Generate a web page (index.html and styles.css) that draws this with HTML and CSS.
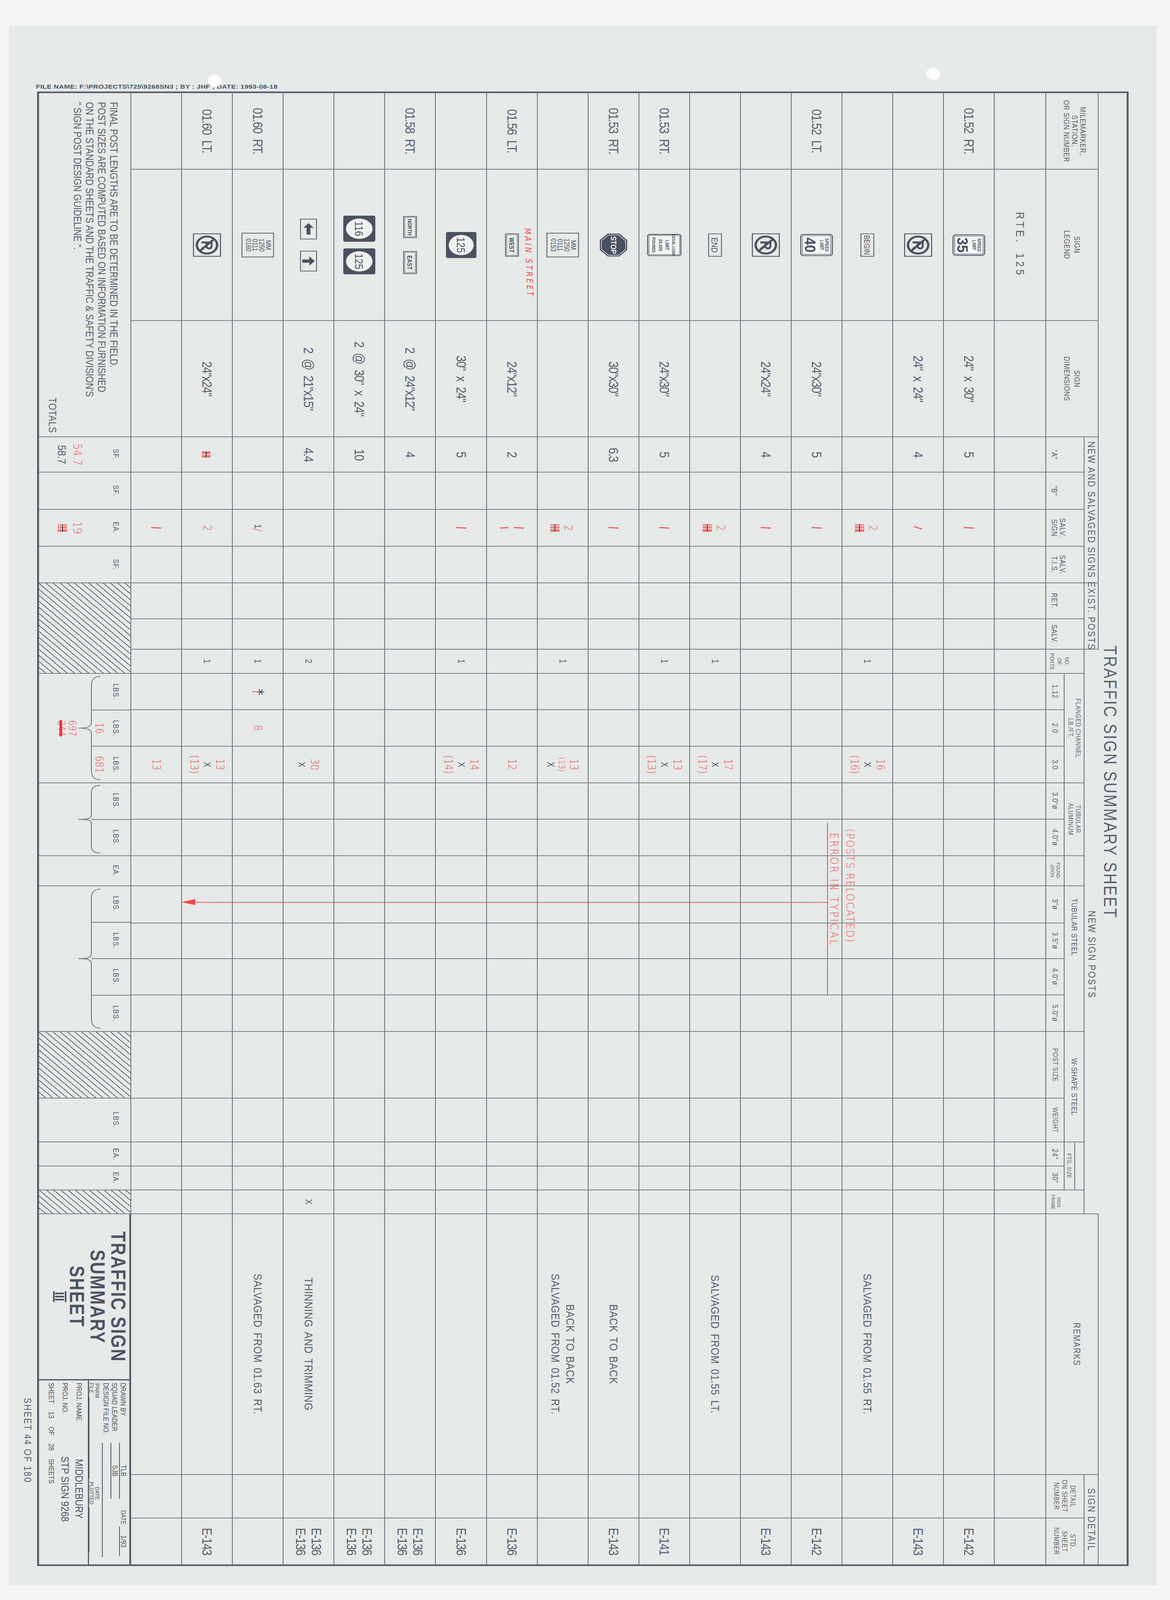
FILE: index.html
```html
<!DOCTYPE html>
<html lang="en">
<head>
<meta charset="utf-8">
<title>Traffic Sign Summary Sheet</title>
<link rel="stylesheet" href="styles.css">
</head>
<body>
<div class="page">
<div class="art">
 <div class="sheet">
   <div class="frame">
    <div class="hdr">
     <div class="band cs28">TRAFFIC SIGN SUMMARY SHEET</div>
     <div class="rs3 bt h-mm">MILEMARKER,<br>STATION,<br>OR SIGN NUMBER</div>
     <div class="rs3 bt h-2l">SIGN<br>LEGEND</div>
     <div class="rs3 bt h-2l">SIGN<br>DIMENSIONS</div>
     <div class="cs4 bt bb grp">NEW AND SALVAGED SIGNS</div>
     <div class="cs2 bt bb grp">EXIST. POSTS</div>
     <div class="cs16 bb grp nsp">NEW SIGN POSTS</div>
     <div class="rs3 bt rem">REMARKS</div>
     <div class="cs2 bt bb grp nr">SIGN DETAIL</div>
     <div class="rs2 bot">"A"</div>
     <div class="rs2 bot">"B"</div>
     <div class="rs2 bot">SALV.<br>SIGN</div>
     <div class="rs2 bot">SALV.<br>T.I.S.</div>
     <div class="rs2 bot">RET.</div>
     <div class="rs2 bot">SALV.</div>
     <div class="rs2 bot sm">NO.<br>OF<br>POSTS</div>
     <div class="cs3 bb sub">FLANGED CHANNEL<br>LB./FT.</div>
     <div class="cs2 bb sub">TUBULAR<br>ALUMINUM</div>
     <div class="bb"></div>
     <div class="cs4 bb sub2 ts">TUBULAR STEEL</div>
     <div class="cs2 bb sub2">W-SHAPE STEEL</div>
     <div class="cs2 bb ftg"><span>FTG. SIZE</span></div>
     <div class="rs2 bot xs">SIGN<br>FRAME</div>
     <div class="rs2 det">DETAIL<br>ON SHEET<br>NUMBER</div>
     <div class="rs2 det nr">STD.<br>SHEET<br>NUMBER</div>
     <div>1.12</div><div>2.0</div><div>3.0</div><div>3.0"ø</div><div>4.0"ø</div><div class="xs">FOUND-<br>ATION</div><div>3"ø</div><div>3.5"ø</div><div>4.0"ø</div><div>5.0"ø</div><div class="s18">POST SIZE</div><div class="s18">WEIGHT</div><div>24"</div><div>30"</div>
    </div>

    <div class="row rte"><i></i><i class="rtet">RTE. 125</i><i></i><i></i><i></i><i></i><i></i><i></i><i></i><i></i><i></i><i></i><i></i><i></i><i></i><i></i><i></i><i></i><i></i><i></i><i></i><i></i><i></i><i></i><i></i><i></i><i></i><i></i></div>

    <!-- R1 -->
    <div class="row"><i>01.52 RT.</i><i><svg class="sg" width="84" height="66" viewBox="0 0 84 66"><g transform="translate(84 0) rotate(90)"><rect x="1.5" y="1.5" width="63" height="81" rx="7" fill="#f3f5f3" stroke="currentColor" stroke-width="2.5"/><rect x="5.5" y="5.5" width="55" height="73" rx="3" fill="none" stroke="currentColor" stroke-width="1.4"/><text x="33" y="20" text-anchor="middle" font-size="12" font-weight="700">SPEED</text><text x="33" y="33" text-anchor="middle" font-size="12" font-weight="700">LIMIT</text><text x="33" y="72" text-anchor="middle" font-size="38" font-weight="700" textLength="46" lengthAdjust="spacingAndGlyphs">35</text></g></svg></i><i>24" x 30"</i><i>5</i><i></i><i><b class="tick"></b></i><i></i><i></i><i></i><i></i><i></i><i></i><i></i><i></i><i></i><i></i><i></i><i></i><i></i><i></i><i></i><i></i><i></i><i></i><i></i><i></i><i></i><i>E-142</i></div>

    <!-- R2 -->
    <div class="row"><i></i><i><svg class="sg" width="72" height="72" viewBox="0 0 72 72"><g transform="translate(72 0) rotate(90)"><rect x="1.5" y="1.5" width="69" height="69" fill="none" stroke="currentColor" stroke-width="2.5"/><circle cx="36" cy="36" r="26" fill="none" stroke="currentColor" stroke-width="6"/><text x="37" y="50" text-anchor="middle" font-size="40" font-weight="700">R</text><line x1="18" y1="18" x2="54" y2="54" stroke="currentColor" stroke-width="6"/></g></svg></i><i>24" x 24"</i><i>4</i><i></i><i><b class="tick sl"></b></i><i></i><i></i><i></i><i></i><i></i><i></i><i></i><i></i><i></i><i></i><i></i><i></i><i></i><i></i><i></i><i></i><i></i><i></i><i></i><i></i><i></i><i>E-143</i></div>

    <!-- R3 -->
    <div class="row"><i></i><i><svg class="sg" width="36" height="72" viewBox="0 0 36 72"><g transform="translate(36 0) rotate(90)"><rect x="1.5" y="1.5" width="69" height="33" fill="none" stroke="currentColor" stroke-width="2"/><text x="36" y="26" text-anchor="middle" font-size="20" textLength="60" lengthAdjust="spacingAndGlyphs">BEGIN</text></g></svg></i><i></i><i></i><i></i><i><span class="stk"><b class="rv">2</b><b class="scr"></b></span></i><i></i><i></i><i></i><i class="n1">1</i><i></i><i></i><i><span class="stk"><b class="rv">16</b><b class="xx">X</b><b class="rv">(16)</b></span></i><i></i><i></i><i></i><i></i><i></i><i></i><i></i><i></i><i></i><i></i><i></i><i></i><i class="rm">SALVAGED FROM 01.55 RT.</i><i></i><i></i></div>

    <!-- R4 -->
    <div class="row"><i>01.52 LT.</i><i><svg class="sg" width="84" height="68" viewBox="0 0 84 68"><g transform="translate(84 0) rotate(90)"><rect x="1.5" y="1.5" width="65" height="81" rx="7" fill="#f3f5f3" stroke="currentColor" stroke-width="2.5"/><rect x="5.5" y="5.5" width="57" height="73" rx="3" fill="none" stroke="currentColor" stroke-width="1.4"/><text x="34" y="20" text-anchor="middle" font-size="12" font-weight="700">SPEED</text><text x="34" y="33" text-anchor="middle" font-size="12" font-weight="700">LIMIT</text><text x="34" y="72" text-anchor="middle" font-size="38" font-weight="700" textLength="46" lengthAdjust="spacingAndGlyphs">40</text></g></svg></i><i>24"x30"</i><i>5</i><i></i><i><b class="tick"></b></i><i></i><i></i><i></i><i></i><i></i><i></i><i></i><i></i><i></i><i></i><i></i><i></i><i></i><i></i><i></i><i></i><i></i><i></i><i></i><i></i><i></i><i>E-142</i></div>

    <!-- R5 -->
    <div class="row"><i></i><i><svg class="sg" width="72" height="72" viewBox="0 0 72 72"><g transform="translate(72 0) rotate(90)"><rect x="1.5" y="1.5" width="69" height="69" fill="none" stroke="currentColor" stroke-width="2.5"/><circle cx="36" cy="36" r="26" fill="none" stroke="currentColor" stroke-width="6"/><text x="37" y="50" text-anchor="middle" font-size="40" font-weight="700">R</text><line x1="18" y1="18" x2="54" y2="54" stroke="currentColor" stroke-width="6"/></g></svg></i><i>24"x24"</i><i>4</i><i></i><i><b class="tick"></b></i><i></i><i></i><i></i><i></i><i></i><i></i><i></i><i></i><i></i><i></i><i></i><i></i><i></i><i></i><i></i><i></i><i></i><i></i><i></i><i></i><i></i><i>E-143</i></div>

    <!-- R6 -->
    <div class="row"><i></i><i><svg class="sg" width="36" height="72" viewBox="0 0 36 72"><g transform="translate(36 0) rotate(90)"><rect x="1.5" y="1.5" width="69" height="33" fill="none" stroke="currentColor" stroke-width="2"/><text x="36" y="27" text-anchor="middle" font-size="22" textLength="46" lengthAdjust="spacingAndGlyphs">END</text></g></svg></i><i></i><i></i><i></i><i><span class="stk"><b class="rv">2</b><b class="scr"></b></span></i><i></i><i></i><i></i><i class="n1">1</i><i></i><i></i><i><span class="stk"><b class="rv">17</b><b class="xx">X</b><b class="rv">(17)</b></span></i><i></i><i></i><i></i><i></i><i></i><i></i><i></i><i></i><i></i><i></i><i></i><i></i><i class="rm">SALVAGED FROM 01.55 LT.</i><i></i><i></i></div>

    <!-- R7 -->
    <div class="row"><i>01.53 RT.</i><i><svg class="sg" width="88" height="68" viewBox="0 0 88 68"><g transform="translate(88 0) rotate(90)"><rect x="1.5" y="1.5" width="65" height="85" rx="5" fill="#f3f5f3" stroke="currentColor" stroke-width="2.5"/><rect x="5" y="5" width="58" height="78" rx="2" fill="none" stroke="currentColor" stroke-width="1.2"/><text x="34" y="24" text-anchor="middle" font-size="10" font-weight="700">LEGAL LOAD</text><text x="34" y="41" text-anchor="middle" font-size="12" font-weight="700">LIMIT</text><text x="34" y="58" text-anchor="middle" font-size="12" font-weight="700">24,000</text><text x="34" y="75" text-anchor="middle" font-size="11" font-weight="700">POUNDS</text></g></svg></i><i>24"x30"</i><i>5</i><i></i><i><b class="tick"></b></i><i></i><i></i><i></i><i class="n1">1</i><i></i><i></i><i><span class="stk"><b class="rv">13</b><b class="xx">X</b><b class="rv">(13)</b></span></i><i></i><i></i><i></i><i></i><i></i><i></i><i></i><i></i><i></i><i></i><i></i><i></i><i></i><i></i><i>E-141</i></div>

    <!-- R8 -->
    <div class="row"><i>01.53 RT.</i><i><svg class="sg" width="72" height="72" viewBox="0 0 72 72"><g transform="translate(72 0) rotate(90)"><polygon points="21,1 51,1 71,21 71,51 51,71 21,71 1,51 1,21" fill="currentColor"/><polygon points="23,5 49,5 67,23 67,49 49,67 23,67 5,49 5,23" fill="none" stroke="#eef1ef" stroke-width="1.5"/><text class="wt" x="36" y="43" text-anchor="middle" font-size="20" font-weight="700" textLength="54" lengthAdjust="spacingAndGlyphs">STOP</text></g></svg></i><i>30"x30"</i><i>6.3</i><i></i><i><b class="tick"></b></i><i></i><i></i><i></i><i></i><i></i><i></i><i></i><i></i><i></i><i></i><i></i><i></i><i></i><i></i><i></i><i></i><i></i><i></i><i></i><i class="rm">BACK TO BACK</i><i></i><i>E-143</i></div>

    <!-- R9 -->
    <div class="row"><i></i><i><svg class="sg" width="84" height="76" viewBox="0 0 84 76"><g transform="translate(84 0) rotate(90)"><rect x="1.5" y="1.5" width="73" height="81" fill="none" stroke="currentColor" stroke-width="2"/><text x="38" y="21" text-anchor="middle" font-size="18">MM</text><text x="38" y="38" text-anchor="middle" font-size="18">1250</text><text x="38" y="55" text-anchor="middle" font-size="18">0111</text><text x="38" y="72" text-anchor="middle" font-size="18">0153</text></g></svg></i><i></i><i></i><i></i><i><span class="stk"><b class="rv">2</b><b class="scr"></b></span></i><i></i><i></i><i></i><i class="n1">1</i><i></i><i></i><i><span class="stk"><b class="rv">13</b><b class="rv rs">(13)</b><b class="xx">X</b></span></i><i></i><i></i><i></i><i></i><i></i><i></i><i></i><i></i><i></i><i></i><i></i><i></i><i class="rm">BACK TO BACK<br>SALVAGED FROM 01.52 RT.</i><i></i><i></i></div>

    <!-- R10 -->
    <div class="row"><i>01.56 LT.</i><i><svg class="sg" width="36" height="72" viewBox="0 0 36 72"><g transform="translate(36 0) rotate(90)"><rect x="1.5" y="1.5" width="69" height="33" fill="none" stroke="currentColor" stroke-width="2"/><rect x="4.5" y="4.5" width="63" height="27" fill="none" stroke="currentColor" stroke-width="1"/><text x="36" y="25" text-anchor="middle" font-size="16" font-weight="700" textLength="46" lengthAdjust="spacingAndGlyphs">WEST</text></g></svg><b class="ms">MAIN STREET</b></i><i>24"x12"</i><i>2</i><i></i><i><span class="stk"><b class="tick"></b><b class="tick t2"></b></span></i><i></i><i></i><i></i><i></i><i></i><i></i><i><b class="rv">12</b></i><i></i><i></i><i></i><i></i><i></i><i></i><i></i><i></i><i></i><i></i><i></i><i></i><i></i><i></i><i>E-136</i></div>

    <!-- R11 -->
    <div class="row"><i></i><i><svg class="sg" width="78" height="80" viewBox="0 0 78 80"><g transform="translate(78 0) rotate(90)"><rect x="0" y="0" width="80" height="78" rx="5" fill="currentColor"/><ellipse cx="40" cy="39" rx="31" ry="32" fill="#eef1ef"/><text x="40" y="50" text-anchor="middle" font-size="30" textLength="48" lengthAdjust="spacingAndGlyphs">125</text></g></svg></i><i>30" x 24"</i><i>5</i><i></i><i><b class="tick"></b></i><i></i><i></i><i></i><i class="n1">1</i><i></i><i></i><i><span class="stk"><b class="rv">14</b><b class="xx">X</b><b class="rv">(14)</b></span></i><i></i><i></i><i></i><i></i><i></i><i></i><i></i><i></i><i></i><i></i><i></i><i></i><i></i><i></i><i>E-136</i></div>

    <!-- R12 -->
    <div class="row"><i>01.58 RT.</i><i><span class="pair p1"><svg class="sg" width="36" height="68" viewBox="0 0 36 68"><g transform="translate(36 0) rotate(90)"><rect x="1.5" y="1.5" width="65" height="33" fill="none" stroke="currentColor" stroke-width="2"/><rect x="4.5" y="4.5" width="59" height="27" fill="none" stroke="currentColor" stroke-width="1"/><text x="34" y="24" text-anchor="middle" font-size="15" font-weight="700" textLength="50" lengthAdjust="spacingAndGlyphs">NORTH</text></g></svg><svg class="sg" width="36" height="71" viewBox="0 0 36 71"><g transform="translate(36 0) rotate(90)"><rect x="1.5" y="1.5" width="68" height="33" fill="none" stroke="currentColor" stroke-width="2"/><rect x="4.5" y="4.5" width="62" height="27" fill="none" stroke="currentColor" stroke-width="1"/><text x="35.5" y="25" text-anchor="middle" font-size="16" font-weight="700" textLength="44" lengthAdjust="spacingAndGlyphs">EAST</text></g></svg></span></i><i>2 @ 24"x12"</i><i>4</i><i></i><i></i><i></i><i></i><i></i><i></i><i></i><i></i><i></i><i></i><i></i><i></i><i></i><i></i><i></i><i></i><i></i><i></i><i></i><i></i><i></i><i></i><i></i><i class="e2">E-136<br>E-136</i></div>

    <!-- R13 -->
    <div class="row"><i></i><i><span class="pair p2"><svg class="sg" width="82" height="80" viewBox="0 0 82 80"><g transform="translate(82 0) rotate(90)"><rect x="0" y="0" width="80" height="82" rx="5" fill="currentColor"/><ellipse cx="40" cy="41" rx="31" ry="34" fill="#eef1ef"/><text x="40" y="52" text-anchor="middle" font-size="30" textLength="46" lengthAdjust="spacingAndGlyphs">116</text></g></svg><svg class="sg" width="82" height="80" viewBox="0 0 82 80"><g transform="translate(82 0) rotate(90)"><rect x="0" y="0" width="80" height="82" rx="5" fill="currentColor"/><ellipse cx="40" cy="41" rx="31" ry="34" fill="#eef1ef"/><text x="40" y="52" text-anchor="middle" font-size="30" textLength="48" lengthAdjust="spacingAndGlyphs">125</text></g></svg></span></i><i>2 @ 30" x 24"</i><i>10</i><i></i><i></i><i></i><i></i><i></i><i></i><i></i><i></i><i></i><i></i><i></i><i></i><i></i><i></i><i></i><i></i><i></i><i></i><i></i><i></i><i></i><i></i><i></i><i class="e2">E-136<br>E-136</i></div>

    <!-- R14 -->
    <div class="row"><i></i><i><span class="pair p3"><svg class="sg" width="44" height="64" viewBox="0 0 44 64"><g transform="translate(44 0) rotate(90)"><rect x="1.5" y="1.5" width="61" height="41" fill="none" stroke="currentColor" stroke-width="2"/><polygon points="14,22 28,9 28,17 49,17 49,27 28,27 28,35" fill="currentColor"/></g></svg><svg class="sg" width="44" height="64" viewBox="0 0 44 64"><g transform="translate(44 0) rotate(90)"><rect x="1.5" y="1.5" width="61" height="41" fill="none" stroke="currentColor" stroke-width="2"/><polygon points="32,6 46,20 37,20 37,38 27,38 27,20 18,20" fill="currentColor"/></g></svg></span></i><i>2 @ 21"x15"</i><i>4.4</i><i></i><i></i><i></i><i></i><i></i><i class="n1">2</i><i></i><i></i><i><span class="stk"><b class="rv">30</b><b class="xx">X</b></span></i><i></i><i></i><i></i><i></i><i></i><i></i><i></i><i></i><i></i><i></i><i></i><i class="n1">X</i><i class="rm">THINNING AND TRIMMING</i><i></i><i class="e2">E-136<br>E-136</i></div>

    <!-- R15 -->
    <div class="row"><i>01.60 RT.</i><i><svg class="sg" width="84" height="76" viewBox="0 0 84 76"><g transform="translate(84 0) rotate(90)"><rect x="1.5" y="1.5" width="73" height="81" fill="none" stroke="currentColor" stroke-width="2"/><text x="38" y="21" text-anchor="middle" font-size="18">MM</text><text x="38" y="38" text-anchor="middle" font-size="18">1250</text><text x="38" y="55" text-anchor="middle" font-size="18">0111</text><text x="38" y="72" text-anchor="middle" font-size="18">0160</text></g></svg></i><i></i><i></i><i></i><i><span class="one"><b class="n1b">1</b><b class="rv sl2">/</b></span></i><i></i><i></i><i></i><i class="n1">1</i><i><b class="ast">*</b></i><i><b class="rv">8</b></i><i></i><i></i><i></i><i></i><i></i><i></i><i></i><i></i><i></i><i></i><i></i><i></i><i></i><i class="rm">SALVAGED FROM 01.63 RT.</i><i></i><i></i></div>

    <!-- R16 -->
    <div class="row"><i>01.60 LT.</i><i><svg class="sg" width="72" height="72" viewBox="0 0 72 72"><g transform="translate(72 0) rotate(90)"><rect x="1.5" y="1.5" width="69" height="69" fill="none" stroke="currentColor" stroke-width="2.5"/><circle cx="36" cy="36" r="26" fill="none" stroke="currentColor" stroke-width="6"/><text x="37" y="50" text-anchor="middle" font-size="40" font-weight="700">R</text><line x1="18" y1="18" x2="54" y2="54" stroke="currentColor" stroke-width="6"/></g></svg></i><i>24"x24"</i><i><b class="scr scr2"></b></i><i></i><i><b class="rv">2</b></i><i></i><i></i><i></i><i class="n1">1</i><i></i><i></i><i><span class="stk"><b class="rv">13</b><b class="xx">X</b><b class="rv">(13)</b></span></i><i></i><i></i><i></i><i></i><i></i><i></i><i></i><i></i><i></i><i></i><i></i><i></i><i></i><i></i><i>E-143</i></div>

    <!-- R17 -->
    <div class="row"><i></i><i></i><i></i><i></i><i></i><i><b class="tick"></b></i><i></i><i></i><i></i><i></i><i></i><i></i><i><b class="rv">13</b></i><i></i><i></i><i></i><i></i><i></i><i></i><i></i><i></i><i></i><i></i><i></i><i></i><i></i><i></i><i></i></div>

    <div class="tot">
     <div class="notes cs3"><p>FINAL POST LENGTHS ARE TO BE DETERMINED IN THE FIELD.<br>POST SIZES ARE COMPUTED BASED ON INFORMATION FURNISHED<br>ON THE STANDARD SHEETS AND THE TRAFFIC &amp; SAFETY DIVISION'S<br>" SIGN POST DESIGN GUIDELINE ".</p><span class="totals">TOTALS</span></div>
     <div class="u"><span>SF.</span><span class="uv"><b class="rv">54.7</b><b class="bv">58.7</b></span></div>
     <div class="u"><span>SF.</span></div>
     <div class="u"><span>EA.</span><span class="uv"><b class="rv">19</b><b class="scr"></b></span></div>
     <div class="u"><span>SF.</span></div>
     <div class="hatch cs3"></div>
     <div class="brace cs3"><div class="bl"><span>LBS.</span><span>LBS.<b class="rv">16</b></span><span>LBS.<b class="rv">681</b></span></div><svg class="brs" viewBox="0 0 58 100" preserveAspectRatio="none"><path d="M58,1 C42,1 35,4 35,10 L35,44 C35,48 30,50 2,50 C30,50 35,52 35,56 L35,90 C35,96 42,99 58,99" fill="none" stroke="#646a79" stroke-width="2" vector-effect="non-scaling-stroke"/></svg><div class="bv2"><b class="rv">697</b><b class="rv strk">344</b></div></div>
     <div class="brace cs2"><div class="bl"><span>LBS.</span><span>LBS.</span></div><svg class="brs" viewBox="0 0 58 100" preserveAspectRatio="none"><path d="M58,1 C42,1 35,4 35,12 L35,44 C35,48 30,50 2,50 C30,50 35,52 35,56 L35,88 C35,96 42,99 58,99" fill="none" stroke="#646a79" stroke-width="2" vector-effect="non-scaling-stroke"/></svg></div>
     <div class="u"><span>EA.</span></div>
     <div class="brace cs4"><div class="bl"><span>LBS.</span><span>LBS.</span><span>LBS.</span><span>LBS.</span></div><svg class="brs" viewBox="0 0 58 100" preserveAspectRatio="none"><path d="M58,1 C42,1 35,3 35,8 L35,46 C35,49 30,50 2,50 C30,50 35,51 35,54 L35,92 C35,97 42,99 58,99" fill="none" stroke="#646a79" stroke-width="2" vector-effect="non-scaling-stroke"/></svg></div>
     <div class="hatch"></div>
     <div class="u"><span>LBS.</span></div>
     <div class="u"><span>EA.</span></div>
     <div class="u"><span>EA.</span></div>
     <div class="hatch"></div>
     <div class="tb cs3">
      <div class="tbt">TRAFFIC SIGN<br>SUMMARY<br>SHEET<br><span class="rom">III</span></div>
      <div class="tbi">
       <div class="tbu">
        <div class="ln"><span class="lb">DRAWN BY</span><span class="fl w1">TLB</span><span class="lb2">DATE</span><span class="fl w2">1/93</span></div>
        <div class="ln"><span class="lb">SQUAD LEADER</span><span class="fl w1">SJB</span></div>
        <div class="ln"><span class="lb">DESIGN FILE NO.</span><span class="fl w3"></span></div>
        <div class="ln ln2"><span class="lbs">IPARM<br>FILE</span><span class="fl w4"></span><span class="lb3">DATE<br>PLOTTED</span><span class="fl w5"></span></div>
       </div>
       <div class="tbl">
        <div class="ln l5"><span class="lb">PROJ. NAME</span><span class="vl">MIDDLEBURY</span></div>
        <div class="ln l5"><span class="lb">PROJ. NO.</span><span class="vl">STP SIGN 9268</span></div>
        <div class="ln l6">SHEET 13 OF 28 SHEETS</div>
       </div>
      </div>
     </div>
    </div>

    <div class="an an-t1">(POSTS RELOCATED)</div>
    <div class="an an-t2">ERROR IN TYPICAL</div>
    <div class="an an-l1"></div>
    <div class="an an-l2"></div>
    <div class="an an-ah"></div>
   </div>
   <div class="sh44">SHEET 44 OF 180</div>
 </div>
 <div class="fname">FILE NAME: F:\PROJECTS\725\9268SN3 ; BY : JHF ; DATE: 1993-08-18</div>
 <div class="hole h1"></div>
 <div class="hole h2"></div>
</div>
</div>
</body>
</html>
```

FILE: styles.css
```css
:root {
  --ln: #646a79;
  --tx: #575e6d;
  --dk: #4b5262;
  --rd: #f0474a;
  --cols: 234px 463px 356px 108px 114px 113px 112px 110px 93px 74px 111px 112px 112px 111px 112px 92px 114px 109px 111px 112px 204px 134px 74px 73px 73px 798px 133px 141px;
}

html, body {
  margin: 0;
  padding: 0;
  height: 100vh;
  overflow: hidden;
}
body {
  background: #f3f4f3;
  font-family: "Liberation Sans", Arial, sans-serif;
  color: var(--tx);
}

/* the window-sized page; the drawing inside is 2996 x 4897 and is fitted to the window height */
.page {
  width: 2996px;
  height: 100vh;
  overflow: hidden;
  background: #f3f4f3;
}
.art {
  width: 2996px;
  height: 4897px;
  display: grid;
  grid-template-columns: 2996px;
  grid-template-rows: 4897px;
  transform-origin: 0 0;
  transform: scaleY(tan(atan2(100vh, 4897px)));
}
.art > * { grid-area: 1 / 1; align-self: start; justify-self: start; }

/* the drawing is laid out in vertical writing mode: rows run right-to-left,
   columns top-to-bottom, and all text reads top-to-bottom */
.sheet {
  writing-mode: vertical-rl;
  width: 2939px;
  height: 4775px;
  margin: 78px 0 0 23px;
  box-sizing: border-box;
  padding-block-start: 72px;
  padding-inline-start: 202px;
  background: #e5e9e7;
}
.frame {
  inline-size: 4503px;
  block-size: 2785px;
  border: 5px solid #565c6b;
  position: relative;
  display: flex;
  flex-direction: column;
}

/* ---------- header ---------- */
.hdr {
  display: grid;
  grid-template-columns: var(--cols);
  grid-template-rows: 72px 38px 51px 45px;
  border-block-end: 2px solid var(--ln);
  flex: none;
}
.hdr > div {
  border-inline-end: 2px solid var(--ln);
  display: flex;
  align-items: center;
  justify-content: center;
  text-align: center;
  font-size: 20px;
  letter-spacing: 1px;
  line-height: 21px;
  white-space: nowrap;
}
.cs2 { grid-column: span 2; }
.cs3 { grid-column: span 3; }
.cs4 { grid-column: span 4; }
.cs16 { grid-column: span 16; }
.cs28 { grid-column: span 28; }
.rs2 { grid-row: span 2; }
.rs3 { grid-row: span 3; }
.hdr > .bt { border-block-start: 2px solid var(--ln); }
.hdr > .bb { border-block-end: 2px solid var(--ln); }
.hdr > .nr { border-inline-end: 0; }

.hdr > .band {
  border-inline-end: 0;
  justify-content: flex-start;
  padding-inline-start: 1691px;
  padding-block-start: 12px;
  font-size: 46px;
  letter-spacing: 4px;
  line-height: 50px;
}
.hdr > .h-mm { align-items: flex-start; padding-block-start: 28px; }
.hdr > .h-2l { line-height: 26px; }
.hdr > .grp { font-size: 26px; letter-spacing: 3px; }
.hdr > .nsp { padding-inline-start: 140px; }
.hdr > .rem { font-size: 24px; letter-spacing: 2px; padding-block-end: 24px; }
.hdr > .bot { align-items: flex-end; padding-block-end: 10px; }
.hdr > .sm { font-size: 15px; line-height: 19px; letter-spacing: 0; padding-block-end: 6px; }
.hdr > .sub { font-size: 17px; line-height: 19px; letter-spacing: 1px; }
.hdr > .sub2 { font-size: 20px; }
.hdr > .ts { justify-content: flex-start; padding-inline-start: 38px; }
.hdr > .ftg { align-items: flex-end; font-size: 15px; letter-spacing: 0.5px; }
.ftg span { display: block; inline-size: 100%; border-block-start: 2px solid var(--ln); line-height: 25px; }
.hdr > .xs { font-size: 13px; line-height: 15px; letter-spacing: 0; }
.hdr > .s18 { font-size: 18px; }
.hdr > .det { font-size: 18px; line-height: 21px; padding-block-start: 4px; }

/* ---------- rows ---------- */
.row {
  display: grid;
  grid-template-columns: var(--cols);
  block-size: 130.06px;
  box-sizing: border-box;
  border-block-end: 2px solid var(--ln);
  flex: none;
}
.row.rte { block-size: 132px; }
.row > i {
  font-style: normal;
  border-inline-end: 2px solid var(--ln);
  display: flex;
  flex-direction: column;
  align-items: center;
  justify-content: center;
  font-size: 35px;
  letter-spacing: -2px;
  word-spacing: 10px;
  white-space: nowrap;
  position: relative;
}
.row > i:last-child { border-inline-end: 0; }
.row > .rtet { font-size: 30px; letter-spacing: 8px; }
.row > .rm { font-size: 30px; letter-spacing: 1px; line-height: 38px; text-align: center; word-spacing: 6px; }
.row > .e2 { line-height: 40px; }
.row > .n1 { font-size: 24px; letter-spacing: 0; }

/* sign icons: drawn upright in SVG, their content turned a quarter turn */
.sg { color: #4a5161; display: block; writing-mode: horizontal-tb; }
.sg text { font-family: "Liberation Sans", Arial, sans-serif; fill: currentColor; writing-mode: horizontal-tb; letter-spacing: 0; word-spacing: 0; }
.sg text.wt { fill: #eef1ef; }
.pair { display: flex; align-items: center; }
.p1 { gap: 39px; }
.p2 { gap: 20px; }
.p3 { gap: 34px; }

/* red hand annotations */
.rv {
  color: var(--rd);
  font-family: "DejaVu Sans", sans-serif;
  font-weight: 200;
  font-size: 28px;
  line-height: 36px;
  letter-spacing: 0;
}
.rv.rs { font-size: 22px; line-height: 26px; }
.xx { font-weight: normal; font-size: 24px; line-height: 30px; color: var(--dk); letter-spacing: 0; }
.stk { display: flex; flex-direction: column; align-items: center; }
.tick {
  display: block;
  inline-size: 2.5px;
  block-size: 26px;
  background: var(--rd);
  transform: rotate(4deg);
}
.tick.sl { transform: rotate(22deg); block-size: 22px; }
.tick.t2 { margin-block-start: 14px; transform: rotate(-3deg); block-size: 22px; }
.scr {
  display: block;
  inline-size: 22px;
  block-size: 24px;
  margin-block-start: 4px;
  background:
    linear-gradient(#333a45, #333a45) center / 2px 100% no-repeat,
    repeating-linear-gradient(180deg, #ee3a3a 0 2px, transparent 2px 4px);
}
.scr2 { inline-size: 18px; block-size: 22px; }
.one { display: flex; align-items: center; }
.n1b { font-weight: normal; font-size: 24px; color: var(--dk); }
.sl2 { font-size: 30px; margin-inline-start: 2px; }
.ast {
  font-family: "DejaVu Sans", sans-serif;
  font-weight: normal;
  font-size: 40px;
  line-height: 40px;
  color: var(--dk);
  padding-inline: 8px;
  background: linear-gradient(var(--rd), var(--rd)) center / 30px 2px no-repeat;
}
.ms {
  position: absolute;
  inset-block-start: 12px;
  inset-inline-start: 179px;
  color: var(--rd);
  font-family: "DejaVu Sans", sans-serif;
  font-weight: 200;
  font-style: italic;
  font-size: 22px;
  line-height: 26px;
  letter-spacing: 6px;
  word-spacing: 0;
  transform: rotate(-2deg);
  transform-origin: center top;
}

/* ---------- totals ---------- */
.tot {
  display: grid;
  grid-template-columns: var(--cols);
  flex: 1;
}
.tot > div { border-inline-end: 2px solid var(--ln); }
.notes {
  display: flex;
  flex-direction: column;
  align-items: flex-start;
  padding-block-start: 28px;
  padding-inline-start: 27px;
  font-size: 27px;
  line-height: 31px;
  white-space: nowrap;
}
.notes p { margin: 0; }
.totals {
  align-self: flex-end;
  margin-block: auto 18px;
  margin-inline-end: 10px;
  font-size: 27px;
  letter-spacing: 1px;
}
.u {
  display: flex;
  flex-direction: column;
  align-items: center;
  padding-block-start: 26px;
  font-size: 20px;
  letter-spacing: 1.5px;
  line-height: 22px;
}
.uv { display: flex; flex-direction: column; align-items: center; margin-block-start: 68px; letter-spacing: 0; }
.uv b { font-size: 30px; line-height: 40px; }
.uv .bv { font-weight: normal; color: var(--tx); font-family: "Liberation Sans", Arial, sans-serif; }
.uv .scr { margin-block-start: 6px; }
.hatch {
  background: repeating-linear-gradient(45deg, transparent 0 11px, #555b6a 11px 13px);
}
.brace { display: flex; flex-direction: column; align-items: center; }
.bl { display: flex; block-size: 100px; inline-size: 100%; }
.bl > span {
  flex: 1;
  border-inline-end: 2px solid var(--ln);
  display: flex;
  flex-direction: column;
  align-items: center;
  padding-block-start: 26px;
  font-size: 20px;
  letter-spacing: 1.5px;
  line-height: 22px;
}
.bl > span:last-child { border-inline-end: 0; }
.bl .rv { margin-block-start: 17px; line-height: 30px; letter-spacing: 0; }
.brs { display: block; inline-size: calc(100% - 10px); block-size: 58px; margin-block-start: -23px; }
.bv2 { display: flex; flex-direction: column; align-items: center; }
.bv2 .rv { line-height: 28px; font-size: 26px; }
.strk { text-decoration: line-through; text-decoration-thickness: 7px; text-decoration-color: #e23a3a; }

/* title block */
.tot > .tb {
  border-inline-end: 0;
  border-block-start: 3px solid #565c6b;
  display: flex;
  color: var(--dk);
}
.tbt {
  inline-size: 505px;
  flex: none;
  text-align: center;
  padding-block-start: 2px;
  font-weight: 700;
  font-size: 52px;
  line-height: 53px;
  letter-spacing: 3px;
}
.rom {
  display: inline-block;
  font-size: 34px;
  line-height: 26px;
  border-block-start: 4px solid;
  border-block-end: 4px solid;
  padding-inline: 2px;
  letter-spacing: 0;
  vertical-align: middle;
}
.tbi { flex: 1; border-inline-start: 4px solid #565c6b; display: flex; flex-direction: column; }
.tbu {
  block-size: 106px;
  border-block-end: 3px solid #565c6b;
  padding-block-start: 4px;
  padding-inline-start: 7px;
  box-sizing: border-box;
  flex: none;
}
.tbl { flex: 1; padding-block-start: 5px; padding-inline-start: 7px; }
.ln { display: flex; align-items: flex-end; block-size: 22px; font-size: 19px; line-height: 20px; white-space: nowrap; }
.ln2 { block-size: 34px; }
.lb { inline-size: 184px; flex: none; }
.lbs { inline-size: 44px; flex: none; font-size: 15px; line-height: 15px; }
.lb2 { margin-inline-start: 35px; inline-size: 50px; font-size: 17px; }
.lb3 { inline-size: 88px; flex: none; text-align: center; font-size: 15px; line-height: 15px; }
.fl { border-block-end: 2px solid var(--dk); text-align: center; line-height: 19px; block-size: 19px; flex: none; }
.w1 { inline-size: 171px; }
.w2 { inline-size: 90px; }
.w3 { inline-size: 350px; }
.w4 { inline-size: 250px; }
.w5 { inline-size: 137px; }
.l5 { block-size: 36px; align-items: center; }
.l5 .lb { inline-size: 200px; font-size: 19px; }
.vl { inline-size: 250px; text-align: center; font-size: 28px; line-height: 30px; }
.l6 { block-size: 34px; align-items: center; word-spacing: 20px; }

/* red overlay annotation (physical offsets inside the frame) */
.an { position: absolute; }
.an-t1, .an-t2 {
  color: var(--rd);
  font-family: "DejaVu Sans", sans-serif;
  font-weight: 200;
  font-size: 29px;
  line-height: 34px;
  white-space: nowrap;
}
.an-t1 { left: 2060px; top: 2251px; letter-spacing: 3px; }
.an-t2 { left: 2019px; top: 2264px; letter-spacing: 5px; }
.an-l1 { left: 2018px; top: 2233px; width: 2px; height: 527px; background: var(--rd); }
.an-l2 { left: 400px; top: 2476px; width: 1618px; height: 2px; background: var(--rd); }
.an-ah {
  left: 364px;
  top: 2467px;
  width: 0;
  height: 0;
  border-top: 9px solid transparent;
  border-bottom: 9px solid transparent;
  border-right: 36px solid var(--rd);
}

.sh44 {
  margin-block-start: 9px;
  margin-inline-start: 3998px;
  font-size: 26px;
  letter-spacing: 3px;
  line-height: 30px;
  color: var(--tx);
}

/* unrotated page marks */
.fname {
  margin: 256px 0 0 92px;
  font-weight: 700;
  font-size: 18px;
  line-height: 19px;
  letter-spacing: 0.3px;
  color: #4b5262;
  white-space: nowrap;
}
.hole { width: 36px; height: 38px; border-radius: 50%; background: #fafbfa; }
.h1 { margin: 228px 0 0 532px; }
.h2 { margin: 207px 0 0 2372px; }
```
